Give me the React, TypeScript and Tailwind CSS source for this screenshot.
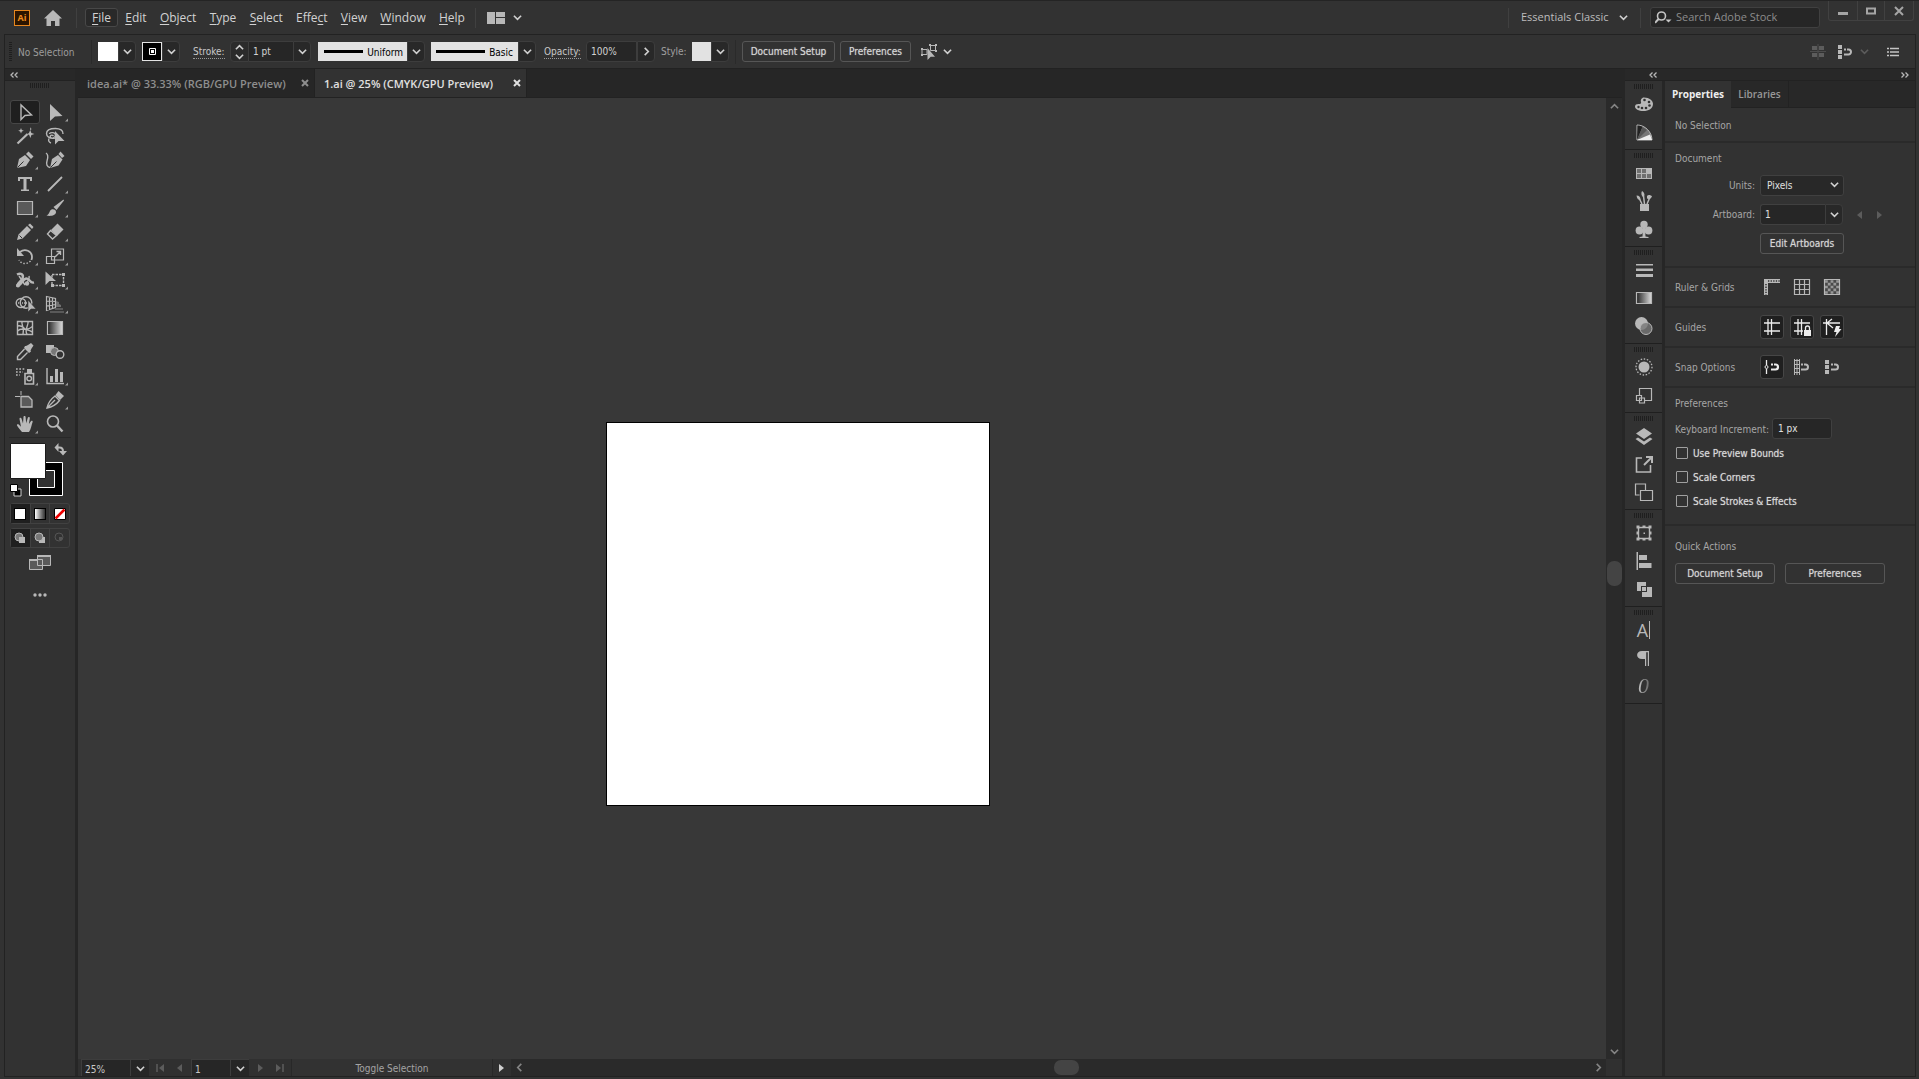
import { useState } from "react";
import type { ReactNode } from "react";
import clsx from "clsx";

const SMALL = "font-['DejaVu_Sans_Condensed','DejaVu_Sans',sans-serif] text-[10px]";

/* ---------- small shared pieces ---------- */

function Chevron({ dir = "down", className = "text-[#d0d0d0]" }: { dir?: "down" | "up" | "left" | "right"; className?: string }) {
  const d = {
    down: "M1 3l4 4 4-4",
    up: "M1 7l4-4 4 4",
    left: "M7 1L3 5l4 4",
    right: "M3 1l4 4-4 4",
  }[dir];
  return (
    <svg width="9" height="9" viewBox="0 0 10 10" className={clsx("shrink-0", className)} aria-hidden>
      <path d={d} fill="none" stroke="currentColor" strokeWidth="1.8" />
    </svg>
  );
}

function DoubleChevron({ flip = false }: { flip?: boolean }) {
  return (
    <svg width="8" height="6" viewBox="0 0 8 6" className={flip ? "rotate-180" : ""} aria-hidden>
      <path d="M3.5 .5L1 3l2.500 2.500M7.500 .5L5 3l2.500 2.500" fill="none" stroke="#b8b8b8" strokeWidth="1.3" />
    </svg>
  );
}

function Grip() {
  return (
    <svg width="20" height="5" viewBox="0 0 20 5" aria-hidden>
      <path d="M.5 0v5M2.500 0v5M4.500 0v5M6.500 0v5M8.500 0v5M10.500 0v5M12.500 0v5M14.500 0v5M16.500 0v5M18.500 0v5" stroke="#1f1f1f" />
    </svg>
  );
}

function DropButton({ label, dir = "down" }: { label: string; dir?: "down" | "right" }) {
  return (
    <button type="button" aria-label={label} className="flex h-[21px] w-[18px] items-center justify-center rounded-r-sm border border-[#3d3d3d] bg-[#282828]">
      <Chevron dir={dir} />
    </button>
  );
}

function OutlineButton({ children, className }: { children: ReactNode; className: string }) {
  return (
    <button type="button" className={clsx("h-[21px] rounded-[3px] border border-[#565656] text-[#d6d6d6] [text-shadow:0_0_1px_#a0a0a0]", SMALL, className)}>
      {children}
    </button>
  );
}

/* ---------- title bar ---------- */

const MENUS: [string, string, string][] = [
  ["", "F", "ile"],
  ["", "E", "dit"],
  ["", "O", "bject"],
  ["", "T", "ype"],
  ["", "S", "elect"],
  ["Effe", "c", "t"],
  ["", "V", "iew"],
  ["", "W", "indow"],
  ["", "H", "elp"],
];

function TitleBar() {
  return (
    <header className="flex h-[34px] shrink-0 items-center border-t border-[#242424] pl-[14px] text-xs text-[#d2d2d2]">
      <div className="flex h-4 w-4 items-center justify-center border border-[#e8871e] bg-[#2c1500] text-[9px] font-bold text-[#f08c1c]">Ai</div>
      <button type="button" aria-label="Home" className="ml-[14px]">
        <svg width="18" height="16" viewBox="0 0 18 16" aria-hidden>
          <path d="M9 0l9 8.500h-2.500V16H11v-5H7v5H2.500V8.500H0z" fill="#b8b8b8" />
        </svg>
      </button>
      <div className="mx-2 ml-[14px] h-5 w-px bg-[#404040]" />
      <nav className="flex w-[386px] items-center justify-between" aria-label="Menu bar">
        {MENUS.map(([pre, key, post], i) => (
          <button
            key={key}
            type="button"
            className={clsx("h-[19px] rounded-[3px] border leading-4", i === 0 ? "border-[#484848] bg-[#292929] px-[6px]" : "border-transparent px-[5px]")}
          >
            {pre}
            <span className="underline underline-offset-2">{key}</span>
            {post}
          </button>
        ))}
      </nav>
      <div className="ml-1 h-5 w-px bg-[#404040]" />
      <button type="button" aria-label="Arrange documents" className="ml-[11px] flex items-center gap-2">
        <svg width="18" height="12" viewBox="0 0 18 12" aria-hidden>
          <path d="M0 0h8v12H0zM9 0h9v5H9zM9 6h9v6H9z" fill="#b8b8b8" />
        </svg>
        <Chevron />
      </button>

      <div className="ml-auto h-5 w-px bg-[#404040]" />
      <button type="button" className="ml-3 flex w-[107px] items-center justify-between text-[11px] whitespace-nowrap text-[#bdbdbd]">
        Essentials Classic
        <Chevron />
      </button>
      <div className="ml-3 h-5 w-px bg-[#404040]" />
      <label className="ml-[9px] flex h-[21px] w-[170px] items-center rounded-[3px] border border-[#404040] bg-[#262626] pl-1">
        <svg width="17" height="14" viewBox="0 0 17 14" className="shrink-0" aria-label="Search">
          <circle cx="6.500" cy="5" r="4" fill="none" stroke="#c4c4c4" strokeWidth="1.600" />
          <path d="M3.800 7.800L0 11.800" stroke="#c4c4c4" strokeWidth="2" />
          <path d="M10.500 8.500h6l-3 3z" fill="#c4c4c4" />
        </svg>
        <input placeholder="Search Adobe Stock" className="ml-1 w-full min-w-0 bg-transparent text-[11px] text-[#ccc] outline-none placeholder:text-[#8c8c8c]" />
      </label>
      <div className="mr-[5px] ml-2 flex h-5 self-start rounded-b-[3px] border border-t-0 border-[#414141]">
        <button type="button" aria-label="Minimize" className="flex w-[28px] items-center justify-center">
          <svg width="10" height="10" viewBox="0 0 10 10"><path d="M0 6h10v3H0z" fill="#a5a5a5" /></svg>
        </button>
        <button type="button" aria-label="Restore" className="flex w-[28px] items-center justify-center border-x border-[#414141]">
          <svg width="10" height="10" viewBox="0 0 10 10"><path d="M1 2.500h8v5H1z" fill="none" stroke="#a5a5a5" strokeWidth="2" /></svg>
        </button>
        <button type="button" aria-label="Close" className="flex w-[28px] items-center justify-center">
          <svg width="10" height="10" viewBox="0 0 10 10"><path d="M1 1l8 8M9 1L1 9" stroke="#a5a5a5" strokeWidth="2" /></svg>
        </button>
      </div>
    </header>
  );
}

/* ---------- control bar ---------- */

function ControlBar() {
  const [stroke, setStroke] = useState("1 pt");
  const [opacity, setOpacity] = useState("100%");
  return (
    <div className={clsx("flex h-[34px] shrink-0 items-center border-b border-[#222] pl-1 text-[#c8c8c8]", SMALL)}>
      <svg width="3" height="20" viewBox="0 0 3 20" aria-hidden>
        <path d="M1.500 0v20" stroke="#1f1f1f" strokeWidth="3" strokeDasharray="1 1" />
      </svg>
      <span className="ml-[6px] w-[73px] pt-px text-[#9d9d9d]">No Selection</span>
      <div className="h-6 w-px bg-[#2a2a2a]" />
      <button type="button" aria-label="Fill" className="ml-[6px] h-[19px] w-5 bg-white" />
      <DropButton label="Fill options" />
      <button type="button" aria-label="Stroke color" className="ml-[6px] flex h-[19px] w-5 items-center justify-center border border-[#e4e4e4] bg-black">
        <svg width="7" height="7" viewBox="0 0 7 7" aria-hidden>
          <path d="M.5 .5h6v6h-6z" fill="none" stroke="#fff" />
          <path d="M2 2h3v3H2z" fill="#fff" />
        </svg>
      </button>
      <DropButton label="Stroke options" />
      <label htmlFor="stroke" className="ml-[13px] w-[32px] border-b border-dotted border-[#999] pt-px leading-3 whitespace-nowrap">Stroke:</label>
      <div className="ml-[5px] flex h-[21px] w-[19px] flex-col items-center justify-center rounded-l-sm border border-[#3d3d3d] bg-[#2b2b2b]">
        <Chevron dir="up" />
        <Chevron />
      </div>
      <input id="stroke" value={stroke} onChange={(e) => setStroke(e.target.value)} className="h-[21px] w-[44px] border-y border-[#3d3d3d] bg-[#262626] pl-1 text-[#d2d2d2]" />
      <DropButton label="Stroke weights" />
      <button type="button" aria-label="Width profile: Uniform" className="ml-[7px] flex h-[19px] w-[89px] items-center bg-[#e2e2e2] pr-1 pl-[6px] text-black">
        <span className="h-[3px] flex-1 bg-black" />
        <span className="ml-1 pt-px">Uniform</span>
      </button>
      <DropButton label="Width profiles" />
      <button type="button" aria-label="Brush: Basic" className="ml-[6px] flex h-[19px] w-[87px] items-center bg-[#e2e2e2] pr-[5px] pl-[5px] text-black">
        <span className="h-[3px] flex-1 bg-black" />
        <span className="ml-1 pt-px">Basic</span>
      </button>
      <DropButton label="Brushes" />
      <label htmlFor="opacity" className="ml-2 w-[37px] border-b border-dotted border-[#999] pt-px leading-3 whitespace-nowrap">Opacity:</label>
      <input id="opacity" value={opacity} onChange={(e) => setOpacity(e.target.value)} className="ml-[5px] h-[21px] w-[51px] rounded-l-sm border border-[#3d3d3d] bg-[#262626] pl-1 text-[#d2d2d2]" />
      <DropButton label="Opacity slider" dir="right" />
      <span className="ml-[6px] w-[31px] text-[#a0a0a0]">Style:</span>
      <button type="button" aria-label="Graphic style" className="h-[19px] w-[19px] bg-[#e2e2e2]" />
      <DropButton label="Graphic styles" />
      <div className="ml-[6px] h-6 w-px bg-[#2a2a2a]" />
      <OutlineButton className="ml-[6px] w-[93px]">Document Setup</OutlineButton>
      <OutlineButton className="ml-[5px] w-[71px]">Preferences</OutlineButton>
      <button type="button" aria-label="Select similar" className="ml-[9px] flex items-center gap-[5px]">
        <svg width="18" height="18" viewBox="0 0 18 18" aria-hidden>
          <path d="M10.500 2.500h5v5h-5zM2 6.500h5v5H2z" fill="none" stroke="#b8b8b8" />
          <path d="M9 1h2v2H9zM15 1h2v2h-2zM15 7h2v2h-2zM1 5h2v2H1zM1 11h2v2H1z" fill="#b8b8b8" />
          <path d="M7.500 5v12l3.200-3.200H15z" fill="#b8b8b8" />
        </svg>
        <Chevron />
      </button>

      <div className="mr-[16px] ml-auto flex items-center">
        <svg width="16" height="16" viewBox="0 0 16 16" aria-hidden>
          <path d="M2 2h5v4H2zM9 2h5v4H9zM2 9h5v4H2zM9 9h5v4H9z" fill="#5c5c5c" />
          <path d="M8 0v16M0 7.500h16" stroke="#4c4c4c" />
        </svg>
        <button type="button" aria-label="Snap to grid" className="ml-[11px] flex items-center gap-[7px]">
          <SnapDots color="#b8b8b8" />
          <Chevron className="text-[#5c5c5c]" />
        </button>
        <button type="button" aria-label="Panel menu" className="ml-[18px]">
          <svg width="12" height="10" viewBox="0 0 12 10"><path d="M0 1.500h2M3 1.500h9M0 5h2M3 5h9M0 8.500h2M3 8.500h9" stroke="#c4c4c4" strokeWidth="1.500" /></svg>
        </button>
      </div>
    </div>
  );
}

function SnapDots({ color }: { color: string }) {
  return (
    <svg width="16" height="16" viewBox="0 0 16 16" aria-hidden>
      <path d="M1 1h4v4H1zM1 6h4v4H1zM1 11h4v4H1z" fill={color} />
      <path d="M7 5.500h4.500a2.500 2.500 0 0 1 0 5H7" fill="none" stroke={color} strokeWidth="2" strokeDasharray="2 1 20" />
    </svg>
  );
}

/* ---------- tool panel ---------- */

const G = "#b8b8b8";
const line = { fill: "none", stroke: G, strokeWidth: 1.4 };

// Each glyph is drawn in a 24 x 24 box; "more" puts the fly-out corner on it.
const TOOLS: { name: string; more?: boolean; art: ReactNode }[] = [
  { name: "Selection", art: <path d="M8 5v14.500l4-4 6.500-.5z" {...line} /> },
  { name: "Direct Selection", more: true, art: <path d="M7 4v17l5-4.500 7.500-.5z" fill={G} /> },
  {
    name: "Magic Wand",
    art: (
      <>
        <path d="M4.500 19.500l10-9.500" stroke={G} strokeWidth="2.200" />
        <path d="M16 9l1.200-3 1.200 3 3 1-3 1-1 3-1.200-3-2-1zM8 4l.8 2 2 .8-2 .8L8 9.500l-.8-1.900-2-.8 2-.8zM17 3l.6 1.500L19 5l-1.400.6L17 7" fill={G} />
      </>
    ),
  },
  {
    name: "Lasso",
    art: (
      <>
        <path d="M12 14c-5 1-8.500-1-8.500-4.500S8 4.500 12.500 4.500s8 2 7.500 5.500M6.500 10c0-2 6-2 6 1s-4 4-5 2.500 1-3.500 3-1.500M6 14.500c-1 2 0 4 2 4.500" {...line} />
        <path d="M12 7v13.500l3.500-3.500h6z" fill={G} />
      </>
    ),
  },
  {
    name: "Pen",
    more: true,
    art: (
      <>
        <path d="M4 20l2-9 6-4 5 5-4 6z" fill={G} />
        <path d="M13 6l2.500-2.500 5 5L18 11z" fill={G} />
        <path d="M4.500 19.500l6-6" stroke="#323232" />
      </>
    ),
  },
  {
    name: "Curvature",
    art: (
      <>
        <path d="M7 20l2-9 6-4 4.500 4.500-4 6z" fill={G} />
        <path d="M15.500 6l2-2.500 4 4.500-2.500 2z" fill={G} />
        <path d="M7.500 19.500l6-6" stroke="#323232" />
        <path d="M3 5c3 2 2 5 1 8s0 6 3 6.500" {...line} />
      </>
    ),
  },
  { name: "Type", more: true, art: <path d="M5 5h14v4h-2V7h-3.500v10.500H16V19H8v-1.500h2.500V7H7v2H5z" fill={G} /> },
  { name: "Line Segment", more: true, art: <path d="M5 19L19 5" stroke={G} strokeWidth="1.800" /> },
  { name: "Rectangle", more: true, art: <path d="M4.500 5.500h15v13h-15z" fill="#5a5a5a" stroke={G} strokeWidth="1.200" /> },
  {
    name: "Paintbrush",
    more: true,
    art: (
      <>
        <path d="M20.500 3.500l-10 7.500 3 3L21 4.500z" fill={G} />
        <path d="M3.500 19.500c2-1 2.500-2.500 3.500-4.500 1.500-3 6.500-1.500 6 1.500-.5 3-5.500 4-9.500 3z" fill={G} />
      </>
    ),
  },
  {
    name: "Pencil",
    more: true,
    art: (
      <>
        <path d="M4 20l1.500-5.500L14 6l4 4-8.500 8.500zM15 5l2-1.500L20.500 7 19 9z" fill={G} />
        <path d="M6.500 15.500l2.500 2.500" stroke="#323232" />
      </>
    ),
  },
  {
    name: "Eraser",
    more: true,
    art: (
      <>
        <path d="M8 10l6.500-6.500 6 6L14 16z" fill={G} />
        <path d="M7.500 10.500l-3 3.500 5 5 4-3.500z" fill="none" stroke={G} strokeWidth="1.400" />
      </>
    ),
  },
  {
    name: "Rotate",
    more: true,
    art: (
      <>
        <path d="M7 8c5-4 12-1 12 5 0 1-.2 2-.6 3" fill="none" stroke={G} strokeWidth="1.800" />
        <path d="M4 4v8h7z" fill={G} />
        <path d="M17.500 17c-3 3.500-9 3.500-11.500-1" fill="none" stroke={G} strokeWidth="1.400" strokeDasharray="1.500 1.700" />
      </>
    ),
  },
  {
    name: "Scale",
    more: true,
    art: (
      <>
        <path d="M8.500 5h12v11h-12zM3.500 12.500h8v7h-8z" {...line} strokeWidth={1.2} />
        <path d="M12 13l5-5M13.500 7.500H17.500V11" {...line} />
      </>
    ),
  },
  {
    name: "Width",
    more: true,
    art: (
      <>
        <path d="M4 6.500c4-2 7 0 5.500 4-1 3-5 4-5 7 4.500 0 5-7 9-7 3.500 0 3 5 7.500 4" fill="none" stroke={G} strokeWidth="2.400" />
        <path d="M6 8l6 9M16 8c1 3-2 6-3 8" {...line} />
        <circle cx="14" cy="15.500" r="2.200" fill={G} />
        <circle cx="5" cy="17.500" r="2" fill={G} />
      </>
    ),
  },
  {
    name: "Free Transform",
    more: true,
    art: (
      <>
        <path d="M9 6.500h11.500v11H9z" {...line} strokeDasharray="2.500 1" />
        <path d="M19 5h3v3h-3zM19 16h3v3h-3zM8 16h3v3H8z" fill={G} />
        <path d="M2.500 3.500v13.500l4-4H13z" fill={G} />
      </>
    ),
  },
  {
    name: "Shape Builder",
    more: true,
    art: (
      <>
        <ellipse cx="8" cy="11" rx="4.800" ry="4.500" {...line} />
        <circle cx="13" cy="10.500" r="5.800" {...line} />
        <path d="M5 11h10" stroke={G} strokeDasharray="1 1" strokeWidth="1.500" />
        <path d="M15 8v12l3-3h5z" fill={G} stroke="#323232" strokeWidth=".6" />
      </>
    ),
  },
  {
    name: "Perspective Grid",
    more: true,
    art: (
      <>
        <path d="M3.500 4.500l9 2v9l-9 3zM6.500 5v13M9.500 6v11M3.500 9l9 .5M3.500 14l9-1.500" {...line} strokeWidth={1.2} />
        <path d="M13 9l3 1v2l2 1v2h-5z" fill="#707070" />
        <path d="M12 17h8M7 20h14" stroke="#808080" />
      </>
    ),
  },
  {
    name: "Mesh",
    art: (
      <>
        <path d="M4.500 5.500h15v13h-15z" {...line} />
        <path d="M4.500 10c4-1 5 1 7 2.500s4 1 8-2M9 5.500c-1 4 3 6 1 13M15 5.500c1 4-4 7-1 13M4.500 15c3-3 7-3 15 1" {...line} />
      </>
    ),
  },
  { name: "Gradient", art: <path d="M4.500 5.500h15v13h-15z" fill="url(#ramp)" stroke={G} strokeWidth="1.200" /> },
  {
    name: "Eyedropper",
    more: true,
    art: (
      <>
        <path d="M13 6l2-1 3-2 2.500 2.500-2 3-1 2 .5 1-2 1.500-5-5L12 6z" fill={G} />
        <path d="M11.500 9l-7 7.500v3h3l7-7" {...line} />
      </>
    ),
  },
  {
    name: "Blend",
    art: (
      <>
        <path d="M3 5h8v8H3z" fill={G} />
        <circle cx="11.500" cy="11.500" r="4" fill="#777" stroke={G} />
        <circle cx="17" cy="14.500" r="3.800" fill="#323232" stroke={G} strokeWidth="1.400" />
      </>
    ),
  },
  {
    name: "Symbol Sprayer",
    more: true,
    art: (
      <>
        <path d="M12 9.500h8.500v10.500H12z" {...line} strokeWidth={1.6} />
        <path d="M14 5h5v4h-5z" fill={G} />
        <circle cx="16.200" cy="14.500" r="2.300" {...line} />
        <path d="M3 5h9M3 8h7M3 11h4" stroke={G} strokeWidth="1.700" strokeDasharray="1.700 1.600" />
      </>
    ),
  },
  {
    name: "Column Graph",
    more: true,
    art: (
      <>
        <path d="M4 4v15.500h17" {...line} />
        <path d="M7 12h3v6H7zM12 5h3v13h-3zM17 8h3v10h-3z" fill={G} />
      </>
    ),
  },
  {
    name: "Artboard",
    art: (
      <>
        <path d="M8 8.500h7.500l3.500 3.500v7H8z" fill="#5a5a5a" stroke={G} strokeWidth="1.300" />
        <path d="M8 3v4M2 8.500h5" stroke={G} />
      </>
    ),
  },
  {
    name: "Slice",
    more: true,
    art: (
      <>
        <path d="M4 20c1-5 4-9 8-12l4.500 4.500C13 17 9 19 4 20zM5 19l7-7" {...line} />
        <path d="M12.500 7l3-4 5.500 5-4 4z" fill={G} />
      </>
    ),
  },
  {
    name: "Hand",
    more: true,
    art: (
      <path d="M9 20c-1.500-2-4-4.500-5-6.500-.5-1.200 1-1.800 2-.8l2 2L6.500 7c-.2-1.300 1.500-1.700 2-.4l1.500 5L10.500 5c0-1.400 2-1.400 2.100 0l.6 6.300 1.600-5.500c.4-1.300 2.200-.9 2 .5L15.900 12l2-2.800c.8-1.100 2.200-.3 1.700.9-1 2.500-1.600 7.400-3.600 9.900z" fill={G} />
    ),
  },
  {
    name: "Zoom",
    art: (
      <>
        <circle cx="10" cy="9.500" r="5.500" {...line} strokeWidth={1.6} />
        <path d="M14 13.500l5.500 6" stroke={G} strokeWidth="2.400" />
      </>
    ),
  },
];

function ToolPanel() {
  const [active, setActive] = useState("Selection");
  return (
    <aside className="flex w-[73px] shrink-0 flex-col border-r-[3px] border-[#262626]">
      <div className="flex h-3 items-center border-b border-[#222] bg-[#282828] pl-[5px]">
        <DoubleChevron />
      </div>
      <div className="flex h-[19px] items-start justify-center pt-[2px]">
        <Grip />
      </div>
      <div className="ml-[5px] grid w-[60px] grid-cols-2" role="toolbar" aria-label="Tools">
        {TOOLS.map((t) => (
          <button
            key={t.name}
            type="button"
            title={t.name}
            aria-pressed={active === t.name}
            onClick={() => setActive(t.name)}
            className={clsx("h-6 rounded-[3px] border", active === t.name ? "border-[#464646] bg-[#1f1f1f]" : "border-transparent")}
          >
            <svg width="28" height="22" viewBox="-2 1 28 22" aria-hidden>
              {t.art}
              {t.more && <path d="M25 18.500v3h-3z" fill="#9a9a9a" />}
            </svg>
          </button>
        ))}
      </div>
      <div className="mx-1 mt-px h-px bg-[#282828]" />
      <svg width="60" height="56" viewBox="10 442 60 56" className="mt-1 ml-[5px]" role="img" aria-label="Fill and stroke">
        <path d="M29.500 462.500h33v33h-33z" fill="#000" stroke="#fff" />
        <path d="M37.500 470.500h17v17h-17z" fill="#323232" stroke="#fff" />
        <path d="M10.500 443.500h35v35h-35z" fill="#fff" stroke="#1c1c1c" />
        <path d="M57 447.500h2.500c2.500 0 3.500 1.500 3.500 4v1" fill="none" stroke={G} strokeWidth="2" />
        <path d="M58.500 443v9l-4-4.500zM59 451h8l-4 4.500z" fill={G} />
        <path d="M14 489h7v7h-7z" fill="#000" stroke="#ccc" />
        <path d="M10.500 484.500h7v7h-7z" fill="#fff" stroke="#000" />
      </svg>
      <div className="mt-[5px] ml-[5px] flex h-[21px] w-[60px] rounded-[3px] border border-[#414141]">
        <button type="button" aria-label="Color" className="flex flex-1 items-center justify-center bg-[#1f1f1f]">
          <span className="h-3 w-3 border border-black bg-white" />
        </button>
        <button type="button" aria-label="Gradient fill" className="flex flex-1 items-center justify-center border-x border-[#414141]">
          <span className="h-3 w-3 border border-black bg-linear-to-r from-white to-[#333]" />
        </button>
        <button type="button" aria-label="None" className="flex flex-1 items-center justify-center">
          <svg width="12" height="12" viewBox="0 0 12 12"><path d="M.5 .5h11v11H.5z" fill="#fff" stroke="#000" /><path d="M1.500 10.500l9-9" stroke="#e00" strokeWidth="2.500" /></svg>
        </button>
      </div>
      <div className="mt-1 ml-[5px] flex h-5 w-[60px] rounded-[3px] border border-[#414141]">
        {["Draw normal", "Draw behind", "Draw inside"].map((mode, i) => (
          <button key={mode} type="button" aria-label={mode} className={clsx("flex flex-1 items-center justify-center border-[#414141]", i === 0 && "bg-[#1f1f1f]", i === 1 && "border-x")}>
            <svg width="12" height="12" viewBox="0 0 12 12">
              {i === 1 && <path d="M5 5h6v6H5z" fill={G} />}
              <circle cx="5" cy="5" r="4" fill={i === 2 ? "none" : "#777"} stroke={i === 2 ? "#555" : G} />
              {i === 0 && <path d="M5 5h6v6H5z" fill={G} />}
              {i === 2 && <path d="M5 5h3v3H5z" fill="#555" />}
            </svg>
          </button>
        ))}
      </div>
      <button type="button" aria-label="Screen mode" className="mx-auto mt-[6px]">
        <svg width="22" height="18" viewBox="0 0 22 18">
          <path d="M.5 5.500h13v10H.5zM8.500 1.500h13v10h-13z" fill="#5a5a5a" stroke={G} />
          <path d="M0 5h8v2H0zM8 1h14v2H8z" fill={G} />
        </svg>
      </button>
      <button type="button" aria-label="Edit toolbar" className="mx-auto mt-[21px]">
        <svg width="14" height="4" viewBox="0 0 14 4"><circle cx="2" cy="2" r="1.700" fill={G} /><circle cx="7" cy="2" r="1.700" fill={G} /><circle cx="12" cy="2" r="1.700" fill={G} /></svg>
      </button>
    </aside>
  );
}

/* ---------- document area ---------- */

const DOC_TABS = [
  { title: "idea.ai* @ 33.33% (RGB/GPU Preview)", width: "w-[237px]" },
  { title: "1.ai @ 25% (CMYK/GPU Preview)", width: "w-[212px]" },
];

function Triangle({ dir, bar = false, className }: { dir: "left" | "right"; bar?: boolean; className?: string }) {
  return (
    <svg width="10" height="8" viewBox="0 0 10 8" className={clsx(className, dir === "right" && "rotate-180")} aria-hidden>
      <path d="M8 0v8L3 4z" fill="currentColor" />
      {bar && <path d="M1 0v8" stroke="currentColor" strokeWidth="1.500" />}
    </svg>
  );
}

function StatusBar() {
  return (
    <div className={clsx("flex h-[17px] shrink-0 items-stretch bg-[#303030] text-[#c8c8c8]", SMALL)}>
      <input aria-label="Zoom level" defaultValue="25%" className="ml-[3px] w-[50px] border border-b-0 border-[#3d3d3d] bg-[#262626] pt-[2px] pl-[3px]" />
      <button type="button" aria-label="Zoom presets" className="flex w-[18px] items-center justify-center border-t border-[#3d3d3d] bg-[#262626] pt-px"><Chevron /></button>
      <div className="flex w-[42px] items-center justify-center gap-2 text-[#5c5c5c]">
        <Triangle dir="left" bar />
        <Triangle dir="left" />
      </div>
      <input aria-label="Artboard number" defaultValue="1" className="w-10 border border-b-0 border-[#3d3d3d] bg-[#262626] pt-[2px] pl-[3px]" />
      <button type="button" aria-label="Artboards" className="flex w-[18px] items-center justify-center border-t border-[#3d3d3d] bg-[#262626] pt-px"><Chevron /></button>
      <div className="flex w-[43px] items-center justify-center gap-2 border-r border-[#282828] text-[#5c5c5c]">
        <Triangle dir="right" />
        <Triangle dir="right" bar />
      </div>
      <span className="flex w-[201px] items-center justify-center border-r border-[#282828] bg-[#323232] pt-[2px] text-[#a4a4a4]">Toggle Selection</span>
      <button type="button" aria-label="Status options" className="flex w-[18px] items-center justify-center">
        <Triangle dir="right" className="text-[#d0d0d0]" />
      </button>
      <div className="flex flex-1 items-center bg-[#2a2a2a]" role="scrollbar" aria-orientation="horizontal" aria-controls="canvas" aria-valuenow={50}>
        <span className="flex w-4 justify-center"><Chevron dir="left" className="text-[#858585]" /></span>
        <span className="grow-[528]" />
        <span className="h-[15px] w-[25px] rounded-[7px] bg-[#444]" />
        <span className="grow-[511]" />
        <span className="flex w-4 justify-center"><Chevron dir="right" className="text-[#858585]" /></span>
      </div>
      <div className="w-4" />
    </div>
  );
}

function DocumentArea() {
  const [current, setCurrent] = useState(1);
  return (
    <main className="flex min-w-0 flex-1 flex-col">
      <div className="flex h-[29px] shrink-0 border-b border-[#222] bg-[#262626]" role="tablist">
        {DOC_TABS.map((tab, i) => (
          <div key={tab.title} className={clsx("flex items-center justify-between border-r border-[#222] pr-[5px] pl-[9px]", tab.width, i === current ? "bg-[#323232] text-[#e0e0e0]" : "text-[#8e8e8e]")}>
            <button type="button" role="tab" aria-selected={i === current} onClick={() => setCurrent(i)} className="pt-[2px] text-[11px] font-semibold whitespace-nowrap">
              {tab.title}
            </button>
            <button type="button" aria-label={`Close ${tab.title}`}>
              <svg width="8" height="8" viewBox="0 0 8 8"><path d="M1 1l6 6M7 1L1 7" stroke="currentColor" strokeWidth="2" /></svg>
            </button>
          </div>
        ))}
      </div>
      <div className="flex min-h-0 flex-1">
        <div id="canvas" className="relative min-w-0 flex-1 overflow-hidden bg-[#383838]">
          {/* artboard, placed on the free canvas */}
          <div className="absolute top-[324px] left-[528px] h-[384px] w-[384px] border border-black bg-white" />
        </div>
        <div className="flex w-4 flex-col items-center bg-[#2a2a2a]" role="scrollbar" aria-orientation="vertical" aria-controls="canvas" aria-valuenow={50}>
          <span className="flex h-4 items-center"><Chevron dir="up" className="text-[#858585]" /></span>
          <span className="grow-[447]" />
          <span className="h-[25px] w-[15px] rounded-[7px] bg-[#444]" />
          <span className="grow-[457]" />
          <span className="flex h-4 items-center"><Chevron className="text-[#858585]" /></span>
        </div>
      </div>
      <StatusBar />
    </main>
  );
}

/* ---------- collapsed panel strip ---------- */

// "art" is drawn in a 20 x 20 box, "glyph" is a typographic sign shown as text.
const PANEL_GROUPS: { name: string; art?: ReactNode; glyph?: ReactNode }[][] = [
  [
    {
      name: "Color",
      art: (
        <>
          <path d="M10 3.500c5.500 0 9 3 9 6.500 0 4.500-4.500 7-9.500 7C4.500 17 1 15 1 12.500c0-2 2-2.700 4-2.500 1.500 0 2.500-.5 2-2-.6-2 .5-4.500 3-4.500z" fill={G} />
          <g fill="#323232"><circle cx="10.500" cy="6" r="1.300" /><circle cx="15" cy="8" r="1.300" /><circle cx="15.500" cy="11.500" r="1.300" /><circle cx="12" cy="14" r="1.300" /><circle cx="8" cy="14" r="1.300" /><circle cx="4.500" cy="13" r="1.200" /></g>
        </>
      ),
    },
    {
      name: "Color Guide",
      art: (
        <>
          <path d="M3 3v15h15C18 10 11 3 3 3z" fill="#777" stroke={G} />
          <path d="M3 18L3.500 3.500C6 3.500 8 4.500 8.500 5z" fill="#222" />
          <path d="M3 18l5.500-13L13 8z" fill="#555" />
          <path d="M3 18l13-5.500 2 5.500z" fill="#eee" />
        </>
      ),
    },
  ],
  [
    {
      name: "Swatches",
      art: (
        <>
          <path d="M2 5h16v11H2z" fill={G} />
          <path d="M3 6h4v4H3zM8 6h4v4H8zM8 11h4v4H8zM3 11h4v4H3zM13 11h4v4h-4z" fill="#707070" />
        </>
      ),
    },
    {
      name: "Brushes",
      art: (
        <>
          <path d="M6 13h9v7H6z" fill={G} />
          <path d="M8 13L5 7M10.500 13L9.500 5M13 13l3-7" stroke={G} strokeWidth="1.500" />
          <path d="M2.500 4.500c3 0 4 1.500 4 4.500-2.500 0-3.500-1.500-4-4.500zM8 0c3 2 3 4.500 1.500 6.500C7 4.500 7 2 8 0zM13 5c1-1.500 4-1 5 .5-1 2.500-3.500 3-5 2z" fill={G} />
        </>
      ),
    },
    {
      name: "Symbols",
      art: (
        <>
          <circle cx="10" cy="5.500" r="3.700" fill={G} /><circle cx="5.500" cy="11.500" r="3.900" fill={G} /><circle cx="14.500" cy="11.500" r="3.900" fill={G} />
          <path d="M9 8h2l.5 9.500 3 .5v1h-9v-1l3-.5z" fill={G} />
        </>
      ),
    },
  ],
  [
    { name: "Stroke", art: <path d="M2 4h17v1.500H2zM2 8.500h17v2.500H2zM2 14h17v3H2z" fill={G} /> },
    { name: "Gradient", art: <path d="M2.500 4.500h15v11h-15z" fill="url(#ramp)" stroke={G} strokeWidth="1.200" /> },
    {
      name: "Transparency",
      art: (
        <>
          <circle cx="7.500" cy="7.500" r="6.500" fill={G} />
          <circle cx="12" cy="12.500" r="6" fill="#777" fillOpacity=".8" stroke={G} />
        </>
      ),
    },
  ],
  [
    {
      name: "Appearance",
      art: (
        <>
          <circle cx="10" cy="10" r="5.500" fill={G} />
          <circle cx="10" cy="10" r="8" fill="none" stroke={G} strokeWidth="1.300" strokeDasharray="1.500 1.600" />
        </>
      ),
    },
    {
      name: "Graphic Styles",
      art: <path d="M5.500 10V3.500h12v12H11M2.500 10.500h5v5h-5zM5.500 13h5v5h-5z" {...line} strokeWidth={1.2} />,
    },
  ],
  [
    {
      name: "Layers",
      art: <path d="M10 2l8 5.500-8 5.500-8-5.500zM4 11.500l6 4 6-4 2.500 1.500-8.500 6-8.500-6z" fill={G} />,
    },
    {
      name: "Asset Export",
      art: (
        <>
          <path d="M8 4H2.500v14h14v-7" fill="none" stroke={G} strokeWidth="1.600" />
          <path d="M10 11l7-7" stroke={G} strokeWidth="2" />
          <path d="M12 2h7v7h-2V4h-5z" fill={G} />
        </>
      ),
    },
    { name: "Artboards", art: <path d="M5.500 13H1.500V2h10v6M6.500 8.500h12v10h-12z" {...line} strokeWidth={1.2} /> },
  ],
  [
    {
      name: "Transform",
      art: (
        <>
          <path d="M4.500 4.500h11v11h-11z" {...line} />
          <path d="M2.500 2.500h3v3h-3zM14.500 2.500h3v3h-3zM2.500 14.500h3v3h-3zM14.500 14.500h3v3h-3zM8.500 2.500h3v2h-3zM8.500 15.500h3v2h-3zM2.500 8.500h2v3h-2zM15.500 8.500h2v3h-2zM9.500 9.500h1.500v1.500H9.500z" fill={G} />
        </>
      ),
    },
    { name: "Align", art: <path d="M2.500 1h1.500v18H2.500zM5 4h8v5H5zM5 12h12.500v5H5z" fill={G} /> },
    {
      name: "Pathfinder",
      art: (
        <>
          <path d="M3 3h9v4H7v5H3zM13 8h5v10H8v-5h5z" fill={G} />
          <path d="M8 8h4v4H8z" fill={G} />
        </>
      ),
    },
  ],
  [
    {
      name: "Character",
      glyph: <span className="border-r border-[#b8b8b8] pr-px text-[18px] leading-[18px] text-[#b8b8b8]">A</span>,
    },
    { name: "Paragraph", art: <path d="M8 3h7v15h-1.200V4.300h-1.600V18H11v-7H8C1.500 11 1.500 3 8 3z" fill={G} /> },
    {
      name: "OpenType",
      glyph: <span className="bg-linear-to-r from-[#d0d0d0] to-[#606060] bg-clip-text px-px font-['Liberation_Serif',serif] text-[22px] leading-6 text-transparent italic">0</span>,
    },
  ],
];

function PanelStrip() {
  return (
    <div className="w-[40px] shrink-0 border-r-[3px] border-[#262626] font-['Open_Sans',sans-serif]">
      {PANEL_GROUPS.map((group) => (
        <div key={group[0].name} className="border-b border-[#1f1f1f] pt-[3px] pb-[3px]">
          <div className="flex h-[6px] items-start justify-center">
            <Grip />
          </div>
          {group.map((p) => (
            <button key={p.name} type="button" title={p.name} className="flex h-7 w-full items-center justify-center">
              {p.glyph ?? <svg width="20" height="20" viewBox="0 0 20 20" aria-hidden>{p.art}</svg>}
            </button>
          ))}
        </div>
      ))}
    </div>
  );
}

/* ---------- properties panel ---------- */

const W = "#ececec";
const guideLines = <path d="M6 2v16M9.500 2v16M2 6h16M2 14h16" fill="none" stroke={W} strokeWidth="1.300" />;

const ICON_ROWS: { label: string; items: { name: string; on?: boolean; art: ReactNode }[] }[] = [
  {
    label: "Ruler & Grids",
    items: [
      { name: "Show rulers", art: <><path d="M2 2h16v4H6v12H2z" fill={G} /><path d="M6 4h12M4 7v11" stroke="#323232" strokeWidth="1.500" strokeDasharray="1.300 1.300" /></> },
      { name: "Show grid", art: <path d="M2.500 2.500h15v15h-15zM7.500 2.500v15M12.500 2.500v15M2.500 7.500h15M2.500 12.500h15" {...line} strokeWidth={1.2} /> },
      { name: "Show transparency grid", art: <><path d="M2.500 2.500h15v15h-15z" fill="#4a4a4a" stroke={G} strokeWidth="1.200" /><path d="M3 4.500h14M3 10h14M3 15.500h14" stroke="#999" strokeWidth="2.700" strokeDasharray="2.800 2.800" /><path d="M5.800 7.200h11M5.800 12.800h11" stroke="#999" strokeWidth="2.700" strokeDasharray="2.800 2.800" /></> },
    ],
  },
  {
    label: "Guides",
    items: [
      { name: "Show guides", on: true, art: guideLines },
      { name: "Lock guides", on: true, art: <>{guideLines}<path d="M11 10h9v10h-9z" fill="#1f1f1f" /><path d="M12 13h7v6h-7z" fill={W} /><path d="M13.500 13v-2a2 2 0 0 1 4 0v2" fill="none" stroke={W} strokeWidth="1.300" /></> },
      { name: "Smart guides", on: true, art: <><path d="M4.500 2v16M1 6h17M5 6l5-4M5 6l6 5" fill="none" stroke={W} strokeWidth="1.300" /><path d="M14 9h4l-1 3h2.500L13 20l1.500-5H12z" fill={W} /></> },
    ],
  },
  {
    label: "Snap Options",
    items: [
      { name: "Snap to point", on: true, art: <><path d="M4.500 3v5M4.500 12v5" stroke={W} strokeWidth="1.300" /><circle cx="4.500" cy="10" r="1.500" fill="none" stroke={W} /><path d="M9 7.500h4.500a2.500 2.500 0 0 1 0 5H9" fill="none" stroke={W} strokeWidth="2.200" strokeDasharray="2 1 20" /></> },
      { name: "Snap to grid", art: <><path d="M2.500 2v16M5 2v16M7.500 2v16M2 3.500h6M2 7.500h6M2 11.500h6M2 15.500h6" stroke={G} /><path d="M9 7.500h4.500a2.500 2.500 0 0 1 0 5H9" fill="none" stroke={G} strokeWidth="2" strokeDasharray="2 1 20" /></> },
      { name: "Snap to pixel", art: <><path d="M3 3h4v4H3zM3 8h4v4H3zM3 13h4v4H3z" fill={G} /><path d="M9 7.500h4.500a2.500 2.500 0 0 1 0 5H9" fill="none" stroke={G} strokeWidth="2" strokeDasharray="2 1 20" /></> },
    ],
  },
];

const CHECKS = ["Use Preview Bounds", "Scale Corners", "Scale Strokes & Effects"];

function PropertiesPanel() {
  return (
    <div className={clsx("min-w-0 flex-1 text-[#a6a6a6]", SMALL)}>
      <div className="flex h-[27px] bg-[#282828] font-['Open_Sans',sans-serif]" role="tablist">
        <button type="button" role="tab" aria-selected className="w-[66px] bg-[#323232] font-bold text-[#ededed]">Properties</button>
        <button type="button" role="tab" aria-selected={false} className="w-[58px] border-r border-b border-[#222] font-semibold text-[#999]">Libraries</button>
        <div className="flex-1 border-b border-[#222]" />
      </div>
      <div className="flex h-[35px] items-center border-b-2 border-[#2a2a2a] pt-[2px] pl-[10px]">No Selection</div>

      <section className="h-[125px] border-b-2 border-[#2a2a2a] pt-2 pl-[10px]">
        <h2 className="leading-4">Document</h2>
        <div className="mt-2 flex items-center">
          <label htmlFor="units" className="w-[80px] text-right">Units:</label>
          <div className="relative ml-[5px]">
            <select id="units" className="h-[21px] w-[84px] appearance-none rounded-[3px] border border-[#404040] bg-[#282828] pl-[6px] text-[#e0e0e0]">
              <option>Pixels</option>
              <option>Points</option>
            </select>
            <span className="pointer-events-none absolute top-[5px] right-[5px]"><Chevron /></span>
          </div>
        </div>
        <div className="mt-2 flex items-center">
          <label htmlFor="artboard" className="w-[80px] text-right">Artboard:</label>
          <input id="artboard" defaultValue="1" className="ml-[5px] h-[21px] w-[65px] rounded-l-[3px] border border-r-0 border-[#404040] bg-[#262626] pl-1 text-[#e0e0e0]" />
          <DropButton label="Artboards" />
          <Triangle dir="left" className="ml-[11px] text-[#5c5c5c]" />
          <Triangle dir="right" className="ml-[11px] text-[#5c5c5c]" />
        </div>
        <OutlineButton className="mt-2 ml-[85px] w-[84px]">Edit Artboards</OutlineButton>
      </section>

      {ICON_ROWS.map((row) => (
        <section key={row.label} className="flex h-[40px] items-center border-b-2 border-[#2a2a2a] pl-[10px]">
          <h2 className="w-[85px]">{row.label}</h2>
          <div className="flex gap-[6px]">
            {row.items.map((it) => (
              <button key={it.name} type="button" title={it.name} className={clsx("flex h-6 w-6 items-center justify-center rounded-[3px] border", it.on ? "border-[#464646] bg-[#1f1f1f]" : "border-transparent")}>
                <svg width="20" height="20" viewBox="0 0 20 20" aria-hidden>{it.art}</svg>
              </button>
            ))}
          </div>
        </section>
      ))}

      <section className="h-[138px] border-b-2 border-[#2a2a2a] pt-2 pl-[10px]">
        <h2 className="leading-4">Preferences</h2>
        <div className="mt-[6px] flex items-center">
          <label htmlFor="increment" className="w-[97px] pt-[2px] whitespace-nowrap">Keyboard Increment:</label>
          <input id="increment" defaultValue="1 px" className="h-[21px] w-[60px] rounded-[3px] border border-[#404040] bg-[#262626] pl-[5px] text-[#e0e0e0]" />
        </div>
        <div className="mt-[2px] ml-px">
          {CHECKS.map((c) => (
            <label key={c} className="flex h-6 items-center gap-[5px] text-[#dadada] [text-shadow:0_0_1px_#a0a0a0]">
              <input type="checkbox" className="h-3 w-3 appearance-none rounded-[1px] border border-[#a0a0a0] checked:bg-[#a0a0a0]" />
              {c}
            </label>
          ))}
        </div>
      </section>

      <section className="pt-[13px] pl-[10px]">
        <h2 className="leading-4">Quick Actions</h2>
        <div className="mt-2 flex gap-[10px]">
          <OutlineButton className="w-[100px]">Document Setup</OutlineButton>
          <OutlineButton className="w-[100px]">Preferences</OutlineButton>
        </div>
      </section>
    </div>
  );
}

export default function App() {
  return (
    <div className="flex h-screen w-full flex-col overflow-hidden bg-[#323232] pb-[2px] font-['Open_Sans','Noto_Sans',sans-serif]">
      <svg width="0" height="0" className="absolute" aria-hidden>
        <linearGradient id="ramp"><stop stopColor="#222" /><stop offset="1" stopColor="#ddd" /></linearGradient>
      </svg>
      <TitleBar />
      <div className="mx-1 mr-[3px] flex min-h-0 flex-1 flex-col border border-[#222]">
        <ControlBar />
        <div className="flex min-h-0 flex-1">
          <ToolPanel />
          <DocumentArea />
          <div className="flex w-[293px] shrink-0 flex-col border-l-[3px] border-[#262626]">
            <div className="flex h-3 shrink-0 items-center justify-between border-b border-[#222] bg-[#282828] pr-[6px] pl-[24px]">
              <DoubleChevron />
              <DoubleChevron flip />
            </div>
            <div className="flex flex-1">
              <PanelStrip />
              <PropertiesPanel />
            </div>
          </div>
        </div>
      </div>
    </div>
  );
}
